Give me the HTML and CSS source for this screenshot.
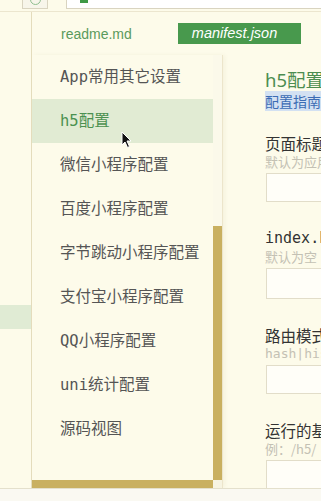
FILE: index.html
```html
<!DOCTYPE html>
<html lang="zh">
<head>
    <meta charset="utf-8">
    <title>manifest.json</title>
    <link rel="stylesheet" href="styles.css">
</head>
<body>

    <div class="toolbar">
        <div class="tool-btn"><span class="tool-ring"></span></div>
        <div class="address"><span class="address-mark"></span></div>
    </div>

    <div class="main">
        <div class="gutter">
            <div class="gutter-active"></div>
        </div>

        <div class="workspace">
            <div class="tabs">
                <a class="tab">readme.md</a>
                <a class="tab active">manifest.json</a>
            </div>

            <div class="form">
                <div class="form-title">h5配置</div>
                <div class="form-guide"><span>配置指南</span></div>

                <div class="field">
                    <div class="field-label">页面标题</div>
                    <div class="field-hint">默认为应用名称</div>
                    <div class="field-input"></div>
                </div>
                <div class="field">
                    <div class="field-label mono">index.html模板路径</div>
                    <div class="field-hint">默认为空</div>
                    <div class="field-input tall"></div>
                </div>
                <div class="field">
                    <div class="field-label">路由模式</div>
                    <div class="field-hint mono">hash|history</div>
                    <div class="field-input"></div>
                </div>
                <div class="field">
                    <div class="field-label">运行的基础路径</div>
                    <div class="field-hint">例：/h5/</div>
                    <div class="field-input"></div>
                </div>
            </div>

            <div class="menu">
                <ul class="menu-list">
                    <li>App常用其它设置</li>
                    <li class="hover">h5配置</li>
                    <li>微信小程序配置</li>
                    <li>百度小程序配置</li>
                    <li>字节跳动小程序配置</li>
                    <li>支付宝小程序配置</li>
                    <li>QQ小程序配置</li>
                    <li>uni统计配置</li>
                    <li>源码视图</li>
                </ul>
                <div class="vscroll"><div class="vthumb"></div></div>
                <div class="hscroll"></div>
                <div class="corner"></div>
            </div>
        </div>
    </div>

    <div class="statusbar"></div>

    <svg class="cursor" width="12" height="18" viewBox="0 0 12 18">
        <path d="M1 1 L1 14 L4 11 L6.5 16.5 L8.5 15.5 L6 10 L10 10 Z" fill="#111" stroke="#fff" stroke-width="1"/>
    </svg>

</body>
</html>
```

FILE: styles.css
```css
body {
    margin: 0;
    width: 321px;
    height: 501px;
    overflow: hidden;
    background-color: #fdfbea;
    font-family: "DejaVu Sans Mono", "Noto Sans CJK SC", monospace;
    position: relative;
}
.toolbar {
    height: 11px;
    display: flex;
    align-items: flex-start;
    border-bottom: 1px solid #ece6cf;
}
.tool-btn {
    margin-left: 22px;
    width: 24px;
    height: 8px;
    border: 1px solid #d9d4c0;
    border-top: none;
    background: #f7f5ea;
    display: flex;
    justify-content: center;
    overflow: hidden;
}
.tool-ring {
    width: 11px;
    height: 11px;
    margin-top: -6px;
    border: 1.5px solid #8fbf8f;
    border-radius: 50%;
    box-sizing: border-box;
}
.address {
    margin-left: 18px;
    flex: 1;
    height: 8px;
    border: 1px solid #d9d4c0;
    border-top: none;
    border-right: none;
    background: #fff;
}
.address-mark {
    display: block;
    margin-left: 13px;
    width: 8px;
    height: 3px;
    background: #3f9a46;
}
.main {
    display: flex;
    height: 476px;
}
.gutter {
    width: 31px;
    border-right: 1px solid #e4dcbc;
    padding-top: 293px;
    box-sizing: content-box;
}
.gutter-active {
    height: 24px;
    background: #e0ebd4;
}
.workspace {
    flex: 1;
    position: relative;
    overflow: hidden;
}
.tabs {
    height: 43px;
    display: flex;
    align-items: center;
    padding-left: 29px;
    font-family: "Liberation Sans", Arial, sans-serif;
    font-size: 14px;
}
.tab {
    color: #5a9a5c;
}
.tab.active {
    margin-left: 46px;
    width: 109px;
    height: 21px;
    line-height: 21px;
    padding-left: 14px;
    background: #48994d;
    color: #fff;
    font-style: italic;
    font-size: 14.5px;
}
.form {
    padding-left: 233px;
    white-space: nowrap;
}
.form-title {
    margin-top: 14px;
    font-family: "Noto Sans", "Noto Sans CJK SC", sans-serif;
    font-size: 18.5px;
    line-height: 22px;
    color: #4c8d50;
}
.form-guide {
    margin-top: 1px;
    font-family: "Noto Sans CJK SC", sans-serif;
    font-size: 14px;
    line-height: 18px;
    color: #3b6cb4;
}
.form-guide span {
    background: #d3e1f2;
}
.field {
    margin-top: 23px;
}
.field + .field {
    margin-top: 26px;
}
.field-label {
    font-family: "Noto Sans CJK SC", sans-serif;
    font-size: 15.5px;
    line-height: 20px;
    color: #333;
}
.field-label.mono, .field-hint.mono {
    font-family: "DejaVu Sans Mono", monospace;
}
.field-label.mono {
    font-size: 15px;
}
.field-hint {
    margin-top: 1px;
    font-family: "Noto Sans CJK SC", sans-serif;
    font-size: 13px;
    line-height: 16px;
    color: #c4c1b4;
}
.field-input {
    margin-top: 3px;
    margin-left: 1px;
    width: 120px;
    height: 27px;
    border: 1px solid #e2ddc9;
    background: #fffef8;
}
.field-input.tall {
    height: 29px;
}
.menu {
    position: absolute;
    left: 0;
    top: 43px;
    width: 190px;
    height: 433px;
    display: grid;
    grid-template-columns: 181px 9px;
    grid-template-rows: 425px 8px;
    background: #fdfbea;
    border-right: 1px solid #ece5cb;
    box-shadow: 2px 0 4px rgba(120, 100, 40, 0.06);
}
.menu-list {
    list-style: none;
    margin: 0;
    padding: 0;
    overflow: hidden;
}
.menu-list li {
    height: 44px;
    line-height: 44px;
    padding-left: 28px;
    font-size: 15.5px;
    color: #555;
    white-space: nowrap;
}
.menu-list li.hover {
    background: #e1ebd3;
    color: #4b9150;
}
.vscroll {
    background: #fbf9ea;
}
.vthumb {
    margin-top: 171px;
    height: 254px;
    background: #c9b060;
}
.hscroll {
    background: #c9b060;
}
.corner {
    background: #f7f4e2;
}
.statusbar {
    height: 12px;
    border-top: 1px solid #e4e0cc;
    background: #faf9f2;
}
.cursor {
    position: absolute;
    left: 121px;
    top: 131px;
}
```
